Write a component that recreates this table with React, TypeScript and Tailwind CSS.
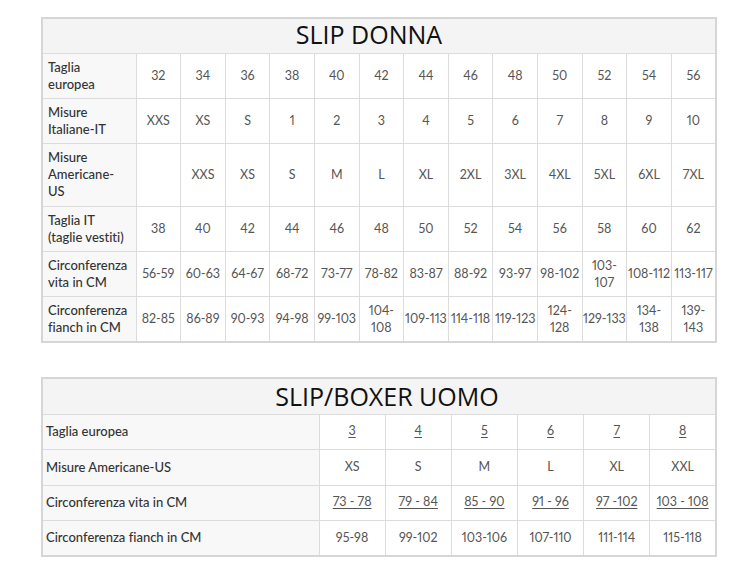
import React from "react";

const donnaRows: { label: string; values: string[]; h: string }[] = [
  { label: "Taglia\neuropea", values: ["32", "34", "36", "38", "40", "42", "44", "46", "48", "50", "52", "54", "56"], h: "h-[45px]" },
  { label: "Misure\nItaliane-IT", values: ["XXS", "XS", "S", "1", "2", "3", "4", "5", "6", "7", "8", "9", "10"], h: "h-[45px]" },
  { label: "Misure\nAmericane-\nUS", values: ["", "XXS", "XS", "S", "M", "L", "XL", "2XL", "3XL", "4XL", "5XL", "6XL", "7XL"], h: "h-[63px]" },
  { label: "Taglia IT\n(taglie vestiti)", values: ["38", "40", "42", "44", "46", "48", "50", "52", "54", "56", "58", "60", "62"], h: "h-[45px]" },
  {
    label: "Circonferenza\nvita in CM",
    values: ["56-59", "60-63", "64-67", "68-72", "73-77", "78-82", "83-87", "88-92", "93-97", "98-102", "103-\n107", "108-112", "113-117"],
    h: "h-[45px]",
  },
  {
    label: "Circonferenza\nfianch in CM",
    values: ["82-85", "86-89", "90-93", "94-98", "99-103", "104-\n108", "109-113", "114-118", "119-123", "124-\n128", "129-133", "134-\n138", "139-\n143"],
    h: "h-[46px]",
  },
];

const uomoRows: { label: string; values: string[]; link: boolean }[] = [
  { label: "Taglia europea", values: ["3", "4", "5", "6", "7", "8"], link: true },
  { label: "Misure Americane-US", values: ["XS", "S", "M", "L", "XL", "XXL"], link: false },
  { label: "Circonferenza vita in CM", values: ["73 - 78", "79 - 84", "85 - 90", "91 - 96", "97 -102", "103 - 108"], link: true },
  { label: "Circonferenza fianch in CM", values: ["95-98", "99-102", "103-106", "107-110", "111-114", "115-118"], link: false },
];

export default function App() {
  return (
    <div className="min-h-screen bg-white pl-[41px] pt-[17px] font-['Lato',sans-serif] [font-variant-ligatures:none]">
      {/* Slip donna */}
      <table className="w-[676px] table-fixed border-collapse border-2 border-[#d6d6d6]">
        <colgroup>
          <col className="w-[94px]" />
          {donnaRows[0].values.map((_, i) => (
            <col key={i} />
          ))}
        </colgroup>
        <thead>
          <tr className="h-[35px] bg-[#f4f4f4]">
            <th
              colSpan={14}
              className="border border-[#dcdcdc] pr-[20px] pb-[3px] text-center font-['Open_Sans',sans-serif] text-[25px] font-normal leading-none text-[#111]"
            >
              SLIP DONNA
            </th>
          </tr>
        </thead>
        <tbody>
          {donnaRows.map((row) => (
            <tr key={row.label} className={row.h}>
              <td className="whitespace-pre-line border border-[#dcdcdc] bg-[#f8f8f8] px-[5px] text-[13px] font-medium leading-[17px] text-[#333]">
                {row.label}
              </td>
              {row.values.map((v, i) => (
                <td
                  key={i}
                  className="whitespace-pre border border-[#dcdcdc] px-0 text-center text-[12.5px] leading-[17px] text-[#555] proportional-nums"
                >
                  {v}
                </td>
              ))}
            </tr>
          ))}
        </tbody>
      </table>

      {/* Slip/Boxer uomo */}
      <table className="mt-[34px] w-[676px] table-fixed border-collapse border-2 border-[#d6d6d6]">
        <colgroup>
          <col className="w-[277px]" />
          {uomoRows[0].values.map((_, i) => (
            <col key={i} />
          ))}
        </colgroup>
        <thead>
          <tr className="h-[36px] bg-[#f4f4f4]">
            <th
              colSpan={7}
              className="border border-[#dcdcdc] pl-[16px] text-center font-['Open_Sans',sans-serif] text-[25px] font-normal leading-none text-[#111]"
            >
              SLIP/BOXER UOMO
            </th>
          </tr>
        </thead>
        <tbody>
          {uomoRows.map((row) => (
            <tr key={row.label} className="h-[35.5px]">
              <td className="whitespace-nowrap border border-[#dcdcdc] bg-[#f8f8f8] px-[3px] text-[13px] font-medium text-[#333]">
                {row.label}
              </td>
              {row.values.map((v, i) => (
                <td
                  key={i}
                  className={
                    row.link
                      ? "whitespace-nowrap border border-[#dcdcdc] text-center text-[12.5px] text-[#555] underline underline-offset-2 proportional-nums"
                      : "whitespace-nowrap border border-[#dcdcdc] text-center text-[12.5px] text-[#555] proportional-nums"
                  }
                >
                  {v}
                </td>
              ))}
            </tr>
          ))}
        </tbody>
      </table>
    </div>
  );
}
